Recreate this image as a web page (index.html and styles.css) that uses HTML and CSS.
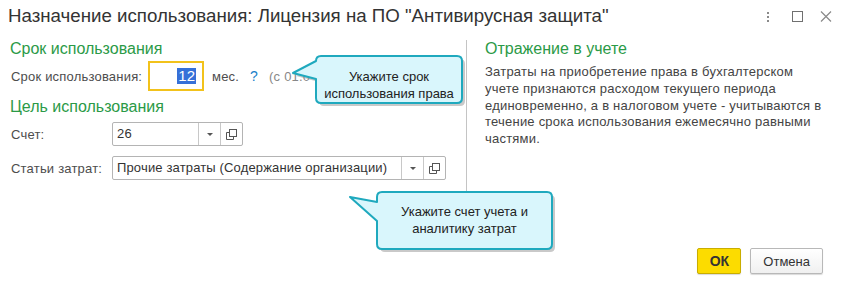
FILE: index.html
```html
<!DOCTYPE html>
<html lang="ru">
<head>
    <meta charset="UTF-8">
    <meta name="viewport" content="width=device-width, initial-scale=1.0">
    <title>Назначение использования</title>
    <link rel="stylesheet" href="styles.css">
</head>
<body>

    <div class="window">
        <div class="title-bar">
            <h1 class="title">Назначение использования: Лицензия на ПО "Антивирусная защита"</h1>
            <div class="win-controls">
                <svg class="ctl" width="12" height="14" viewBox="0 0 12 14">
                    <rect x="5" y="2" width="2" height="2" fill="#8a8a8a"/>
                    <rect x="5" y="6" width="2" height="2" fill="#8a8a8a"/>
                    <rect x="5" y="10" width="2" height="2" fill="#8a8a8a"/>
                </svg>
                <svg class="ctl" width="12" height="14" viewBox="0 0 12 14">
                    <rect x="1.5" y="1.5" width="10" height="10" fill="none" stroke="#707070"/>
                </svg>
                <svg class="ctl" width="12" height="14" viewBox="0 0 12 14">
                    <path d="M1 1.5 L11 11.5 M11 1.5 L1 11.5" stroke="#8a8a8a" stroke-width="1.2"/>
                </svg>
            </div>
        </div>

        <div class="content">
            <div class="left-col">
                <h2 class="group-title">Срок использования</h2>
                <div class="row row-term">
                    <span class="label label-wide">Срок использования:</span>
                    <div class="num-input"><span class="selected">12</span></div>
                    <span class="unit">мес.</span>
                    <span class="help">?</span>
                    <span class="hint">(с 01.0</span>
                </div>

                <h2 class="group-title group-second">Цель использования</h2>
                <div class="row row-account">
                    <span class="label">Счет:</span>
                    <div class="field field-short">
                        <span class="field-value">26</span>
                        <span class="field-btn"><span class="arrow"></span></span>
                        <span class="field-btn">
                            <svg width="11" height="11" viewBox="0 0 11 11">
                                <rect x="3.5" y="0.5" width="7" height="7" fill="none" stroke="#555"/>
                                <path d="M3.5 3.5 H0.5 V10.5 H7.5 V7.5" fill="none" stroke="#555"/>
                            </svg>
                        </span>
                    </div>
                </div>
                <div class="row row-costs">
                    <span class="label">Статьи затрат:</span>
                    <div class="field field-long">
                        <span class="field-value">Прочие затраты (Содержание организации)</span>
                        <span class="field-btn"><span class="arrow"></span></span>
                        <span class="field-btn">
                            <svg width="11" height="11" viewBox="0 0 11 11">
                                <rect x="3.5" y="0.5" width="7" height="7" fill="none" stroke="#555"/>
                                <path d="M3.5 3.5 H0.5 V10.5 H7.5 V7.5" fill="none" stroke="#555"/>
                            </svg>
                        </span>
                    </div>
                </div>
            </div>

            <div class="divider"></div>

            <div class="right-col">
                <h2 class="group-title">Отражение в учете</h2>
                <p class="note">Затраты на приобретение права в бухгалтерском учете признаются расходом текущего периода единовременно, а в налоговом учете - учитываются в течение срока использования ежемесячно равными частями.</p>
            </div>
        </div>

        <div class="footer">
            <button type="button" class="btn btn-ok">ОК</button>
            <button type="button" class="btn">Отмена</button>
        </div>

        <!-- подсказки поверх формы -->
        <div class="callout callout-term">
            <svg class="callout-shape" width="185" height="62" viewBox="0 0 185 62">
                <path d="M31 4 H167 Q172 4 172 9 V46 Q172 51 167 51 H31 Q26 51 26 46 V27 L3 21 L26 9 Q26 4 31 4 Z" fill="#888" opacity="0.45" transform="translate(3 3)"/>
                <path d="M31 4 H167 Q172 4 172 9 V46 Q172 51 167 51 H31 Q26 51 26 46 V27 L3 21 L26 9 Q26 4 31 4 Z" fill="#d9f6fc" stroke="#1fa9be" stroke-width="2" stroke-linejoin="round"/>
            </svg>
            <div class="callout-text">Укажите срок<br>использования права</div>
        </div>

        <div class="callout callout-account">
            <svg class="callout-shape" width="215" height="72" viewBox="0 0 215 72">
                <path d="M37 4 H202 Q207 4 207 9 V56 Q207 61 202 61 H37 Q32 61 32 56 V33 L5 9 L32 14 V9 Q32 4 37 4 Z" fill="#888" opacity="0.45" transform="translate(3 3)"/>
                <path d="M37 4 H202 Q207 4 207 9 V56 Q207 61 202 61 H37 Q32 61 32 56 V33 L5 9 L32 14 V9 Q32 4 37 4 Z" fill="#d9f6fc" stroke="#1fa9be" stroke-width="2" stroke-linejoin="round"/>
            </svg>
            <div class="callout-text">Укажите счет учета и<br>аналитику затрат</div>
        </div>
    </div>

</body>
</html>
```

FILE: styles.css
```css
body {
    margin: 0;
    font-family: 'Liberation Sans', Arial, sans-serif;
    background-color: #fff;
    color: #4d4d4d;
}

.window {
    position: relative;
    width: 842px;
    height: 286px;
    overflow: hidden;
    background-color: #fff;
}

.title-bar {
    display: flex;
    align-items: center;
    height: 31px;
    padding: 0 10px 0 8px;
}

.title {
    flex: 1;
    margin: 0;
    font-size: 18.7px;
    font-weight: normal;
    color: #333;
    white-space: nowrap;
}

.win-controls {
    display: flex;
    gap: 17px;
    margin-top: 2px;
}

.content {
    display: flex;
    height: 200px;
    margin-top: 9px;
}

.left-col {
    width: 456px;
    padding-left: 10px;
}

.group-title {
    margin: 0;
    font-size: 16px;
    line-height: 18px;
    font-weight: normal;
    color: #2b9a47;
}

.group-second {
    margin-top: 7px;
}

.row {
    display: flex;
    align-items: center;
    font-size: 13px;
    letter-spacing: 0.2px;
}

.row-term {
    height: 30px;
    margin-top: 3px;
}

.row-account {
    margin-top: 6px;
}

.row-costs {
    margin-top: 10px;
}

.label {
    width: 101px;
    padding-left: 1px;
    white-space: nowrap;
}

.label-wide {
    width: 137px;
}

.num-input {
    box-sizing: border-box;
    width: 56px;
    height: 30px;
    border: 2px solid #f2c21b;
    display: flex;
    align-items: center;
    justify-content: flex-end;
    padding-right: 6px;
    font-size: 15px;
    letter-spacing: 0;
}

.selected {
    background-color: #3670d8;
    color: #fff;
    padding: 0 1px;
    line-height: 16px;
}

.unit {
    margin-left: 8px;
}

.help {
    margin-left: 11px;
    color: #1a7fc9;
    font-size: 14px;
}

.hint {
    margin-left: 11px;
    color: #888;
    white-space: nowrap;
}

.field {
    box-sizing: border-box;
    display: flex;
    height: 24px;
    border: 1px solid #b4b4b4;
    border-radius: 2px;
    letter-spacing: 0.15px;
}

.field-short {
    width: 131px;
}

.field-long {
    width: 334px;
}

.field-value {
    flex: 1;
    padding-left: 4px;
    line-height: 22px;
    color: #333;
    font-size: 13px;
    white-space: nowrap;
    overflow: hidden;
}

.field-btn {
    display: flex;
    align-items: center;
    justify-content: center;
    width: 21px;
    border-left: 1px solid #c8c8c8;
}

.arrow {
    width: 0;
    height: 0;
    border-left: 3px solid transparent;
    border-right: 3px solid transparent;
    border-top: 3px solid #555;
}

.divider {
    width: 1px;
    height: 192px;
    background-color: #c4c4c4;
}

.right-col {
    padding-left: 18px;
}

.note {
    width: 338px;
    margin: 6px 0 0;
    font-size: 13px;
    line-height: 16.8px;
    letter-spacing: 0.22px;
    color: #444;
}

.footer {
    display: flex;
    justify-content: flex-end;
    gap: 9px;
    padding-right: 19px;
    margin-top: 8px;
}

.btn {
    height: 26px;
    padding: 0 12px;
    font-family: 'Liberation Sans', Arial, sans-serif;
    font-size: 13px;
    color: #333;
    background: linear-gradient(#fff, #f0f0f0);
    border: 1px solid #b8b8b8;
    border-radius: 2px;
    box-shadow: 0 1px 1px rgba(0, 0, 0, 0.15);
}

.btn-ok {
    width: 44px;
    padding: 0;
    font-size: 14px;
    font-weight: bold;
    background: #fcdc00;
    border-color: #c9ad00;
}

.callout {
    position: absolute;
}

.callout-shape {
    position: absolute;
    top: 0;
    left: 0;
}

.callout-text {
    position: absolute;
    text-align: center;
    font-size: 13px;
    line-height: 17px;
    color: #222;
}

.callout-term {
    left: 290px;
    top: 52px;
    width: 185px;
    height: 62px;
}

.callout-term .callout-text {
    left: 26px;
    top: 16px;
    width: 146px;
}

.callout-account {
    left: 345px;
    top: 188px;
    width: 215px;
    height: 72px;
}

.callout-account .callout-text {
    left: 32px;
    top: 15px;
    width: 175px;
}
```
